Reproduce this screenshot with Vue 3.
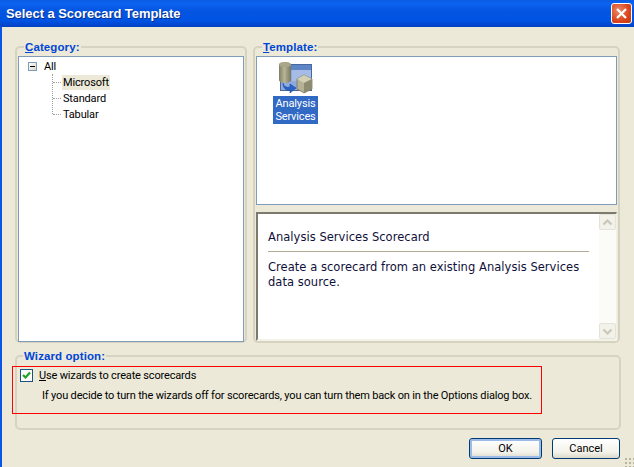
<script setup>
const items = [
  { label: 'Microsoft', selected: true },
  { label: 'Standard', selected: false },
  { label: 'Tabular', selected: false }
]
</script>

<template>
  <div class="window">
    <header class="titlebar">
      <span class="title">Select a Scorecard Template</span>
      <button class="close" aria-label="Close">
        <svg width="13" height="13" viewBox="0 0 13 13">
          <path d="M2 2 L11 11 M11 2 L2 11" stroke="#fff" stroke-width="2.2" fill="none" />
        </svg>
      </button>
    </header>

    <main class="body">
      <div class="top">
        <fieldset class="group category">
          <legend><u>C</u>ategory:</legend>
          <div class="tree">
            <div class="root-row">
              <span class="expander"><i></i></span>
              <span>All</span>
            </div>
            <ul class="children">
              <li v-for="item in items" :key="item.label" class="child">
                <span class="child-label" :class="{ selected: item.selected }">{{ item.label }}</span>
              </li>
            </ul>
          </div>
        </fieldset>

        <fieldset class="group template">
          <legend><u>T</u>emplate:</legend>
          <div class="gallery">
            <div class="tile">
              <svg class="tile-icon" width="34" height="33" viewBox="0 0 34 33">
                <defs>
                  <linearGradient id="cyl" x1="0" x2="1" y1="0" y2="0">
                    <stop offset="0" stop-color="#7f7f68" />
                    <stop offset="0.45" stop-color="#b9b594" />
                    <stop offset="1" stop-color="#77775f" />
                  </linearGradient>
                </defs>
                <rect x="1.5" y="3.5" width="31" height="26" fill="#8ea9de" stroke="#47699f" />
                <rect x="2" y="4" width="30" height="5" fill="#5f86c4" />
                <rect x="13" y="9" width="19" height="11" fill="#a6bbe6" />
                <path d="M0 4 C0 0 12 0 12 4 V19 C12 23 0 23 0 19 Z" fill="url(#cyl)" />
                <ellipse cx="6" cy="3.6" rx="6" ry="2.6" fill="#a9a787" />
                <path d="M4 22 C5 26 8 27 11 26 V23 L17 27 L11 32 V29 C7 30 4 27 4 22 Z" fill="#2a62c8" stroke="#1c4b9c" stroke-width=".6" />
                <path d="M25 14 L33 18 V28 L25 32 L18 28 V18 Z" fill="#b5b293" stroke="#6e6e5a" stroke-width=".7" />
                <path d="M18 18 L25 22 L33 18 L25 14 Z" fill="#d2d0b4" />
                <path d="M25 22 V32 L33 28 V18 Z" fill="#8d8b70" />
              </svg>
              <span class="tile-label">Analysis<br />Services</span>
            </div>
          </div>
          <div class="description">
            <div class="desc-text">
              <h3 class="desc-title">Analysis Services Scorecard</h3>
              <p class="desc-body">Create a scorecard from an existing Analysis Services data source.</p>
            </div>
            <div class="scrollbar">
              <span class="arrow">
                <svg width="11" height="7" viewBox="0 0 11 7"><path d="M1.5 5.5 L5.5 1.5 L9.5 5.5" stroke="#c8c8b8" stroke-width="2.2" fill="none" /></svg>
              </span>
              <span class="arrow">
                <svg width="11" height="7" viewBox="0 0 11 7"><path d="M1.5 1.5 L5.5 5.5 L9.5 1.5" stroke="#c8c8b8" stroke-width="2.2" fill="none" /></svg>
              </span>
            </div>
          </div>
        </fieldset>
      </div>

      <fieldset class="group wizard">
        <legend>Wizard option:</legend>
        <label class="check-row">
          <span class="checkbox">
            <svg width="11" height="11" viewBox="0 0 11 11"><path d="M2 5 L4.5 7.5 L9 2.5" stroke="#21a121" stroke-width="2.2" fill="none" /></svg>
          </span>
          <span><u>U</u>se wizards to create scorecards</span>
        </label>
        <p class="hint">If you decide to turn the wizards off for scorecards, you can turn them back on in the Options dialog box.</p>
        <div class="highlight"></div>
      </fieldset>

      <div class="actions">
        <button class="btn default">OK</button>
        <button class="btn">Cancel</button>
      </div>
      <div class="grip"></div>
    </main>
  </div>
</template>

<style>
html, body { margin: 0; padding: 0; background: #ece9d8; overflow: hidden; }
</style>

<style scoped>
* { box-sizing: border-box; }
.window {
  width: 634px;
  height: 467px;
  display: flex;
  flex-direction: column;
  font-family: Roboto, "Liberation Sans", Arial, sans-serif;
  font-size: 11px;
  letter-spacing: -.16px;
  color: #000;
  background: #ece9d8;
  overflow: hidden;
}
.titlebar {
  height: 27px;
  flex: none;
  display: flex;
  align-items: center;
  justify-content: space-between;
  padding: 0 2px 0 6px;
  background: linear-gradient(180deg, #0a5be0 0%, #0d63f0 12%, #0455e0 40%, #0054e4 75%, #0342c4 100%);
}
.title {
  color: #fff;
  font-family: "Liberation Sans", Arial, sans-serif;
  font-weight: 700;
  font-size: 13px;
  letter-spacing: -.06px;
  text-shadow: 1px 1px 0 #0a2f8a;
}
.close {
  width: 21px;
  height: 21px;
  padding: 0;
  display: flex;
  align-items: center;
  justify-content: center;
  border: 1px solid #fff;
  border-radius: 3px;
  background: radial-gradient(circle at 35% 35%, #ec8a68, #d9441c 60%, #bf3a12);
}
.body {
  position: relative;
  flex: 1;
  border-left: 2px solid #0a55e4;
  padding: 14px 12px 0 13px;
}
.top {
  display: flex;
  gap: 6px;
  height: 302px;
}
.group {
  margin: 0;
  padding: 0 1px 1px;
  border: 2px solid #d6d3c0;
  border-radius: 5px;
  min-width: 0;
}
.group legend {
  margin-left: 6px;
  padding: 0 1px;
  color: #0046d5;
  font-family: "Liberation Sans", Arial, sans-serif;
  font-weight: 700;
  font-size: 11.5px;
  letter-spacing: .1px;
  line-height: 12px;
}
.category { width: 232px; }
.template {
  width: 367px;
  display: flex;
  flex-direction: column;
}
.tree {
  height: 286px;
  margin-top: 3px;
  background: #fff;
  border: 1px solid #7f9db9;
  padding: 1px 0 0 9px;
}
.root-row {
  height: 16px;
  display: flex;
  align-items: center;
  gap: 7px;
}
.expander {
  width: 9px;
  height: 9px;
  display: flex;
  align-items: center;
  justify-content: center;
  border: 1px solid #7f9db9;
  background: linear-gradient(135deg, #fff, #d8d8c8);
}
.expander i {
  width: 5px;
  height: 1px;
  background: #000;
}
.children {
  list-style: none;
  margin: 0 0 0 24px;
  padding: 0;
  border-left: 1px dotted #a0a0a0;
  height: 40px;
}
.child {
  height: 16px;
  display: flex;
  align-items: center;
  padding-left: 9px;
  position: relative;
}
.child::before {
  content: "";
  position: absolute;
  left: 0;
  top: 8px;
  width: 8px;
  border-top: 1px dotted #a0a0a0;
}
.child-label { padding: 1px 1px; }
.child-label.selected { background: #ece9d8; }
.gallery {
  height: 149px;
  flex: none;
  margin-top: 3px;
  background: #fff;
  border: 1px solid #7f9db9;
  padding: 4px 0 0 16px;
}
.tile {
  width: 45px;
  display: flex;
  flex-direction: column;
  align-items: center;
}
.tile-icon { display: block; }
.tile-label {
  margin-top: 2px;
  width: 45px;
  height: 28px;
  background: #316ac5;
  color: #fff;
  text-align: center;
  line-height: 13px;
  padding-top: 1px;
}
.description {
  flex: none;
  height: 129px;
  width: 361px;
  margin-top: 7px;
  display: flex;
  background: #fff;
  border-top: 2px solid #7c7a6c;
  border-left: 2px solid #7c7a6c;
  border-right: 1px solid #f4f2e8;
  border-bottom: 2px solid #f4f2e8;
}
.desc-text {
  flex: 1;
  padding: 16px 10px 0 10px;
  font-family: "DejaVu Sans", sans-serif;
  font-size: 11.5px;
  letter-spacing: .04px;
  color: #10103a;
}
.desc-title {
  margin: 0;
  font-size: 11.5px;
  font-weight: 400;
  line-height: 14px;
  padding-bottom: 7px;
  border-bottom: 1px solid #b0ac98;
}
.desc-body {
  margin: 8px 0 0;
  line-height: 15px;
}
.scrollbar {
  width: 17px;
  flex: none;
  display: flex;
  flex-direction: column;
  justify-content: space-between;
  background: #fbfbf8;
}
.arrow {
  height: 16px;
  display: flex;
  align-items: center;
  justify-content: center;
  background: #f2f1ea;
  border: 1px solid #e4e3d8;
  border-radius: 2px;
}
.wizard {
  position: relative;
  height: 80px;
  width: 606px;
  margin-top: 7px;
  padding: 0;
}
.wizard legend { margin-left: 6px; }
.check-row {
  display: flex;
  align-items: center;
  gap: 6px;
  margin: 6px 0 0 3px;
  height: 15px;
}
.checkbox {
  width: 13px;
  height: 13px;
  display: flex;
  align-items: center;
  justify-content: center;
  border: 1px solid #1c5180;
  background: #fcfcfa;
}
.hint {
  margin: 5px 0 0 25px;
  line-height: 15px;
  white-space: nowrap;
}
.highlight {
  position: absolute;
  left: -5px;
  top: 4px;
  width: 530px;
  height: 48px;
  border: 1px solid #f00;
  pointer-events: none;
}
.actions {
  display: flex;
  justify-content: flex-end;
  gap: 10px;
  width: 606px;
  margin-top: 8px;
  padding-right: 1px;
}
.btn {
  height: 21px;
  width: 68px;
  padding: 0;
  border: 1px solid #003c74;
  border-radius: 3px;
  background: linear-gradient(180deg, #fff, #f3f2ea 70%, #dcd8ca);
  font-family: Roboto, "Liberation Sans", Arial, sans-serif;
  font-size: 11px;
  color: #000;
}
.btn.default {
  width: 73px;
  box-shadow: inset 0 0 0 2px #9dbbe8;
}
.grip {
  position: absolute;
  right: 0;
  bottom: 0;
  width: 10px;
  height: 10px;
  background-image: radial-gradient(#b8b5a2 1px, transparent 1px);
  background-size: 4px 4px;
}
</style>
